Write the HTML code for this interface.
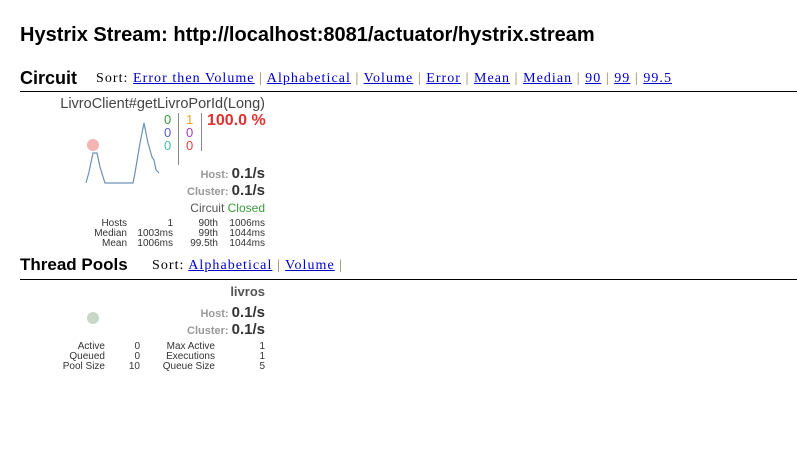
<!DOCTYPE html>
<html><head><style>
body{margin:0;width:797px;height:455px;background:#fff;position:relative;overflow:hidden;font-family:"Liberation Sans",Arial,sans-serif;}
.a{position:absolute;white-space:nowrap;}
.r{text-align:right;}
.sort{font-family:"Liberation Serif",serif;font-size:14px;letter-spacing:1.05px;color:#000;}
.sort a{color:#00c;text-decoration:underline;}
.sort span{color:#8a7a50;}
.g{color:#999;font-size:11px;font-weight:bold;}
.v{color:#333;font-size:15px;font-weight:bold;}
.s{font-size:10px;color:#333;line-height:10px;}
</style></head><body>
<div class="a" style="left:20px;top:24px;font-size:20px;font-weight:bold;color:#000;">Hystrix Stream: http://localhost:8081/actuator/hystrix.stream</div>
<div class="a" style="left:20px;top:68px;font-size:18px;font-weight:bold;">Circuit</div>
<div class="a sort" style="left:96px;top:71px;">Sort: <a>Error then Volume</a> <span>|</span> <a>Alphabetical</a> <span>|</span> <a>Volume</a> <span>|</span> <a>Error</a> <span>|</span> <a>Mean</a> <span>|</span> <a>Median</a> <span>|</span> <a>90</a> <span>|</span> <a>99</a> <span>|</span> <a>99.5</a></div>
<div class="a" style="left:20px;top:91px;width:777px;height:1px;background:#000;"></div>

<div class="a r" style="right:532px;top:96px;font-size:14.5px;color:#444;">LivroClient#getLivroPorId(Long)</div>
<svg class="a" style="left:0;top:0" width="300" height="200">
<circle cx="93" cy="145" r="6" fill="#f4b4b4"/>
<polyline fill="none" stroke="#6a90b8" stroke-width="1.2" points="86,183 89,172 93,153 97,153 100,167 105,183 133,183 135,173 140,143 144,123 148,143 152,157 154,160 156,170 159,173"/>
<line x1="178.5" y1="113" x2="178.5" y2="165" stroke="#888"/>
<line x1="201.5" y1="113" x2="201.5" y2="151" stroke="#888"/>
</svg>
<div class="a" style="left:164px;top:113px;font-size:13px;line-height:13px;">
<div style="color:#3a9a3a">0</div><div style="color:#5a5ad0">0</div><div style="color:#40c0a0">0</div></div>
<div class="a" style="left:186px;top:113px;font-size:13px;line-height:13px;">
<div style="color:#f0a020">1</div><div style="color:#a040c0">0</div><div style="color:#e04040">0</div></div>
<div class="a" style="left:207px;top:112px;font-size:16px;font-weight:bold;color:#e03030;">100.0 %</div>
<div class="a r" style="right:532px;top:165px;"><span class="g">Host: </span><span class="v">0.1/s</span></div>
<div class="a r" style="right:532px;top:182px;"><span class="g">Cluster: </span><span class="v">0.1/s</span></div>
<div class="a r" style="right:532px;top:201px;font-size:12px;color:#555;">Circuit <span style="color:#3a9a3a">Closed</span></div>
<div class="a s r" style="right:670px;top:219px;">Hosts<br>Median<br>Mean</div>
<div class="a s r" style="right:624px;top:219px;">1<br>1003ms<br>1006ms</div>
<div class="a s r" style="right:579px;top:219px;">90th<br>99th<br>99.5th</div>
<div class="a s r" style="right:532px;top:219px;">1006ms<br>1044ms<br>1044ms</div>

<div class="a" style="left:20px;top:255px;font-size:17px;font-weight:bold;">Thread Pools</div>
<div class="a sort" style="left:152px;top:258px;">Sort: <a>Alphabetical</a> <span>|</span> <a>Volume</a> <span>|</span></div>
<div class="a" style="left:20px;top:279px;width:777px;height:1px;background:#000;"></div>
<div class="a r" style="right:532px;top:284px;font-size:13px;font-weight:bold;color:#555;">livros</div>
<svg class="a" style="left:0;top:0" width="120" height="340"><circle cx="93" cy="318" r="6" fill="#c8d8c8"/></svg>
<div class="a r" style="right:532px;top:304px;"><span class="g">Host: </span><span class="v">0.1/s</span></div>
<div class="a r" style="right:532px;top:321px;"><span class="g">Cluster: </span><span class="v">0.1/s</span></div>
<div class="a s r" style="right:692px;top:342px;">Active<br>Queued<br>Pool Size</div>
<div class="a s r" style="right:657px;top:342px;">0<br>0<br>10</div>
<div class="a s r" style="right:582px;top:342px;">Max Active<br>Executions<br>Queue Size</div>
<div class="a s r" style="right:532px;top:342px;">1<br>1<br>5</div>
</body></html>
